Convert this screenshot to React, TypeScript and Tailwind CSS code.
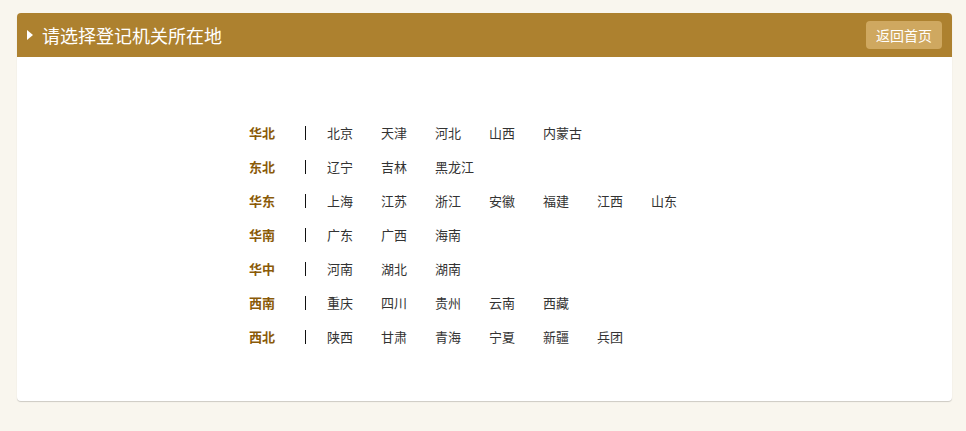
import React from 'react';

const REGIONS: { name: string; items: string[] }[] = [
  { name: '华北', items: ['北京', '天津', '河北', '山西', '内蒙古'] },
  { name: '东北', items: ['辽宁', '吉林', '黑龙江'] },
  { name: '华东', items: ['上海', '江苏', '浙江', '安徽', '福建', '江西', '山东'] },
  { name: '华南', items: ['广东', '广西', '海南'] },
  { name: '华中', items: ['河南', '湖北', '湖南'] },
  { name: '西南', items: ['重庆', '四川', '贵州', '云南', '西藏'] },
  { name: '西北', items: ['陕西', '甘肃', '青海', '宁夏', '新疆', '兵团'] },
];

const FONT = { fontFamily: '"Noto Sans CJK SC", "Noto Sans", sans-serif' };

export default function App() {
  return (
    <div className="min-h-[431px] bg-[#f9f6ee] pt-[13px] px-[17px] pb-[30px]" style={FONT}>
      <div className="w-[935px] bg-white rounded-[4px] shadow-[0_1px_1px_rgba(0,0,0,0.18)] overflow-hidden">
        {/* Header */}
        <div className="h-[44px] bg-[#ad812f] flex items-center pl-[10px] pr-[10px]">
          <span className="w-0 h-0 border-y-[5px] border-y-transparent border-l-[6px] border-l-white mr-[9px]" />
          <h2 className="text-[18px] text-white leading-none">请选择登记机关所在地</h2>
          <button className="ml-auto h-[28px] px-[10px] rounded-[4px] bg-[#cfa860] text-white text-[14px] leading-none">
            返回首页
          </button>
        </div>

        {/* Region list */}
        <div className="pt-[59px] pb-[47px] pl-[232px]">
          {REGIONS.map(r => (
            <div key={r.name} className="h-[34px] flex items-center text-[13px]">
              <span className="w-[56px] font-bold text-[#8a5a08]">{r.name}</span>
              <span className="w-px h-[14px] bg-[#111] mr-[21px]" />
              {r.items.map(item => (
                <a key={item} className="mr-[28px] text-[#333] cursor-pointer">
                  {item}
                </a>
              ))}
            </div>
          ))}
        </div>
      </div>
    </div>
  );
}
